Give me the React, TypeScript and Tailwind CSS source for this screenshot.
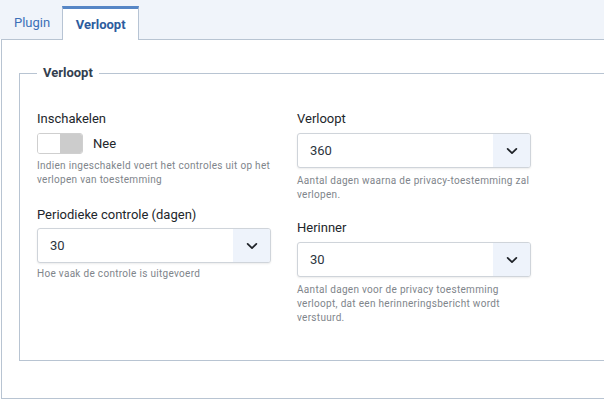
import React from "react";

function Chevron() {
  return (
    <svg width="14" height="14" viewBox="0 0 16 16" fill="none">
      <path d="M3 5.5l5 5 5-5" stroke="#1f2328" strokeWidth="2" strokeLinecap="round" strokeLinejoin="round" />
    </svg>
  );
}

function Select({ value }: { value: string }) {
  return (
    <div className="flex h-[35px] w-[234px] overflow-hidden rounded-[3px] border border-[#cfd4da] bg-white shadow-[0_1px_2px_rgba(0,0,0,0.08)]">
      <div className="flex flex-1 items-center pl-[12px] text-[13px] text-[#2c3440]">{value}</div>
      <div className="flex w-[37px] items-center justify-center bg-[#eef3fb]">
        <Chevron />
      </div>
    </div>
  );
}

export default function App() {
  return (
    <div
      className="h-[399px] w-[604px] overflow-hidden bg-white"
      style={{ fontFamily: "Roboto, 'Noto Sans', sans-serif" }}
    >
      <div className="flex h-[39px] items-end bg-[#f0f4fa] pl-[2px]">
        <div className="flex h-[33px] items-center px-[12px] text-[13px] text-[#3b70b8]">Plugin</div>
        <div className="relative z-10 -mb-px flex h-[34px] w-[77px] items-center justify-center border-x border-t-[3px] border-x-[#b7c4d4] border-t-[#5686c6] bg-white text-[13px] font-bold text-[#2d5c9e]">
          Verloopt
        </div>
      </div>
      <div className="ml-[1px] h-[360px] w-[640px] border border-[#b8c4d2] bg-white pl-[17px] pt-[25px]">
        <fieldset className="w-[620px] border border-[#b8c4d2] pb-[35px] pl-[17px] pt-[29px]">
          <legend className="px-[6px] text-[13px] font-bold leading-[16px] text-[#33404f]">Verloopt</legend>
          <div className="flex gap-[26px]">
            <div className="flex w-[234px] flex-col">
              <div className="text-[13px] leading-[18px] text-[#22262b]">Inschakelen</div>
              <div className="mt-[5px] flex items-center">
                <div className="flex h-[21px] w-[46px] overflow-hidden rounded-[3px] border border-[#cfcfcf]">
                  <div className="flex-1 bg-white" />
                  <div className="flex-1 bg-[#cccccc]" />
                </div>
                <span className="ml-[10px] text-[13px] text-[#22262b]">Nee</span>
              </div>
              <div className="mt-[5px] text-[10px] leading-[14px] tracking-[0.3px] text-[#80858b]">
                Indien ingeschakeld voert het controles uit op het verlopen van toestemming
              </div>
              <div className="mt-[19px] text-[13px] leading-[18px] text-[#22262b]">Periodieke controle (dagen)</div>
              <div className="mt-[4px]">
                <Select value="30" />
              </div>
              <div className="mt-[4px] text-[10px] leading-[14px] tracking-[0.3px] text-[#80858b]">Hoe vaak de controle is uitgevoerd</div>
            </div>
            <div className="flex w-[234px] flex-col">
              <div className="text-[13px] leading-[18px] text-[#22262b]">Verloopt</div>
              <div className="mt-[5px]">
                <Select value="360" />
              </div>
              <div className="mt-[6px] text-[10px] leading-[14px] tracking-[0.3px] text-[#80858b]">
                Aantal dagen waarna de privacy-toestemming zal verlopen.
              </div>
              <div className="mt-[17px] text-[13px] leading-[18px] text-[#22262b]">Herinner</div>
              <div className="mt-[5px]">
                <Select value="30" />
              </div>
              <div className="mt-[6px] text-[10px] leading-[14px] tracking-[0.3px] text-[#80858b]">
                Aantal dagen voor de privacy toestemming verloopt, dat een herinneringsbericht wordt verstuurd.
              </div>
            </div>
          </div>
        </fieldset>
      </div>
    </div>
  );
}
